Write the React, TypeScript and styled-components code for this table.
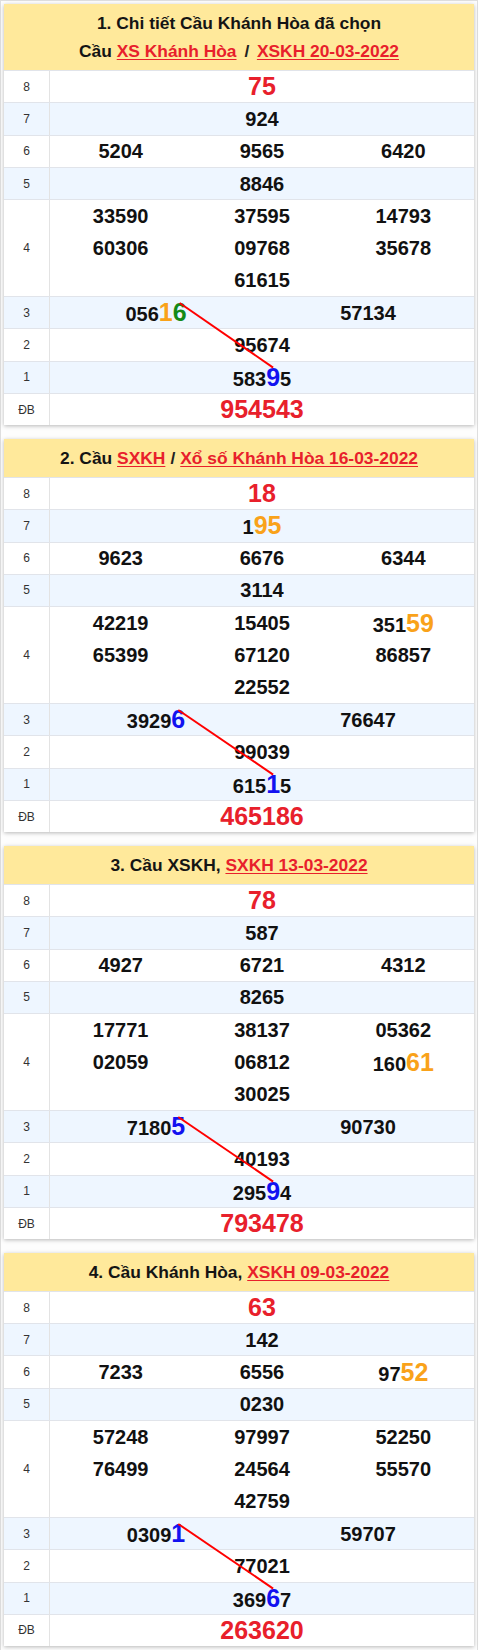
import React, { useLayoutEffect, useRef, useState } from "react";
import styled, { createGlobalStyle } from "styled-components";

type Tone = "red" | "orange" | "green" | "blue";
type Piece = string | { t: string; tone: Tone; anchor?: "start" | "end" };
type Num = { pieces: Piece[]; big?: boolean };
type Cell = Num | null;
type RowData = { label: string; cols: number; lines: Cell[][] };
type HeadPart = string | { link: string } | { sep: string; wide?: boolean };
type CardData = { head: HeadPart[][]; rows: RowData[] };

const TONES: Record<Tone, string> = {
  red: "#e8202b",
  orange: "#f9a21a",
  green: "#138a17",
  blue: "#1212f0",
};

const n = (...pieces: Piece[]): Num => ({ pieces });
const big = (t: string): Num => ({ pieces: [t], big: true });
const o = (t: string): Piece => ({ t, tone: "orange" });
const g = (t: string, anchor?: "start" | "end"): Piece => ({ t, tone: "green", anchor });
const b = (t: string, anchor?: "start" | "end"): Piece => ({ t, tone: "blue", anchor });

const row = (label: string, cols: number, lines: (Cell | string)[][]): RowData => ({
  label,
  cols,
  lines: lines.map((l) => l.map((c) => (typeof c === "string" ? n(c) : c))),
});

const CARDS: CardData[] = [
  {
    head: [
      ["1. Chi tiết Cầu Khánh Hòa đã chọn"],
      ["Cầu ", { link: "XS Khánh Hòa" }, { sep: "/", wide: true }, { link: "XSKH 20-03-2022" }],
    ],
    rows: [
      row("8", 1, [[big("75")]]),
      row("7", 1, [["924"]]),
      row("6", 3, [["5204", "9565", "6420"]]),
      row("5", 1, [["8846"]]),
      row("4", 3, [
        ["33590", "37595", "14793"],
        ["60306", "09768", "35678"],
        [null, "61615", null],
      ]),
      row("3", 2, [[n("056", o("1"), g("6", "start")), "57134"]]),
      row("2", 1, [["95674"]]),
      row("1", 1, [[n("583", b("9", "end"), "5")]]),
      row("ĐB", 1, [[big("954543")]]),
    ],
  },
  {
    head: [["2. Cầu ", { link: "SXKH" }, { sep: "/" }, { link: "Xổ số Khánh Hòa 16-03-2022" }]],
    rows: [
      row("8", 1, [[big("18")]]),
      row("7", 1, [[n("1", o("95"))]]),
      row("6", 3, [["9623", "6676", "6344"]]),
      row("5", 1, [["3114"]]),
      row("4", 3, [
        ["42219", "15405", n("351", o("59"))],
        ["65399", "67120", "86857"],
        [null, "22552", null],
      ]),
      row("3", 2, [[n("3929", b("6", "start")), "76647"]]),
      row("2", 1, [["99039"]]),
      row("1", 1, [[n("615", b("1", "end"), "5")]]),
      row("ĐB", 1, [[big("465186")]]),
    ],
  },
  {
    head: [["3. Cầu XSKH, ", { link: "SXKH 13-03-2022" }]],
    rows: [
      row("8", 1, [[big("78")]]),
      row("7", 1, [["587"]]),
      row("6", 3, [["4927", "6721", "4312"]]),
      row("5", 1, [["8265"]]),
      row("4", 3, [
        ["17771", "38137", "05362"],
        ["02059", "06812", n("160", o("61"))],
        [null, "30025", null],
      ]),
      row("3", 2, [[n("7180", b("5", "start")), "90730"]]),
      row("2", 1, [["40193"]]),
      row("1", 1, [[n("295", b("9", "end"), "4")]]),
      row("ĐB", 1, [[big("793478")]]),
    ],
  },
  {
    head: [["4. Cầu Khánh Hòa, ", { link: "XSKH 09-03-2022" }]],
    rows: [
      row("8", 1, [[big("63")]]),
      row("7", 1, [["142"]]),
      row("6", 3, [["7233", "6556", n("97", o("52"))]]),
      row("5", 1, [["0230"]]),
      row("4", 3, [
        ["57248", "97997", "52250"],
        ["76499", "24564", "55570"],
        [null, "42759", null],
      ]),
      row("3", 2, [[n("0309", b("1", "start")), "59707"]]),
      row("2", 1, [["77021"]]),
      row("1", 1, [[n("369", b("6", "end"), "7")]]),
      row("ĐB", 1, [[big("263620")]]),
    ],
  },
];

const LINE_UNIT = 32.3;

const GlobalStyle = createGlobalStyle`
  html, body {
    margin: 0;
    padding: 0;
    background: #ffffff;
  }
  body {
    font-family: "Liberation Sans", Arial, sans-serif;
    color: #111;
  }
`;

const Page = styled.main`
  box-sizing: border-box;
  width: 478px;
  min-height: 1650px;
  border: 1px solid #dedede;
  border-bottom: none;
  padding: 3px 3px 0 3px;
  display: flex;
  flex-direction: column;
  gap: 13.7px;
  background: #fdfdfd;
`;

const Card = styled.section`
  background: #ffffff;
  box-shadow: 0 1px 4px rgba(0, 0, 0, 0.28);
`;

const Header = styled.header`
  background: #ffe99b;
  padding: 5px 6px;
  text-align: center;
`;

const HeadLine = styled.div`
  font-size: 17.4px;
  line-height: 28px;
  font-weight: 700;
  color: #141414;
  white-space: nowrap;
`;

const HeadLink = styled.a`
  color: #e8202b;
  text-decoration: underline;
  text-decoration-thickness: 1px;
  text-underline-offset: 2px;
`;

const Sep = styled.span<{ $wide?: boolean }>`
  margin: 0 ${(p) => (p.$wide ? 7.5 : 5)}px 0 ${(p) => (p.$wide ? 8 : 5)}px;
  color: #222;
`;

const Board = styled.div`
  position: relative;
`;

const Row = styled.div<{ $lines: number; $alt: boolean }>`
  box-sizing: border-box;
  display: grid;
  grid-template-columns: 46px 1fr;
  height: ${(p) => p.$lines * LINE_UNIT}px;
  border-top: 1px solid #e1e4ea;
  background: ${(p) => (p.$alt ? "#eef6ff" : "#ffffff")};
`;

const Label = styled.div`
  display: flex;
  align-items: center;
  justify-content: center;
  border-right: 1px solid #e3e3e3;
  font-size: 12px;
  color: #333;
`;

const Values = styled.div<{ $cols: number; $lines: number }>`
  display: grid;
  grid-template-columns: repeat(${(p) => p.$cols}, 1fr);
  grid-template-rows: repeat(${(p) => p.$lines}, 1fr);
  align-items: center;
  justify-items: center;
`;

const Number = styled.span<{ $big?: boolean }>`
  font-size: ${(p) => (p.$big ? 25 : 20)}px;
  line-height: 1;
  font-weight: 700;
  color: ${(p) => (p.$big ? TONES.red : "#111")};
  white-space: nowrap;
`;

const Hi = styled.span<{ $tone: Tone }>`
  font-size: 25px;
  color: ${(p) => TONES[p.$tone]};
`;

const Overlay = styled.svg`
  position: absolute;
  left: 0;
  top: 0;
  width: 100%;
  height: 100%;
  pointer-events: none;
  overflow: visible;
`;

function NumberView({ num }: { num: Num }) {
  return (
    <Number $big={num.big}>
      {num.pieces.map((p, i) =>
        typeof p === "string" ? (
          <React.Fragment key={i}>{p}</React.Fragment>
        ) : (
          <Hi key={i} $tone={p.tone} data-anchor={p.anchor}>
            {p.t}
          </Hi>
        )
      )}
    </Number>
  );
}

function Table({ rows }: { rows: RowData[] }) {
  const ref = useRef<HTMLDivElement>(null);
  const [seg, setSeg] = useState<[number, number, number, number] | null>(null);

  useLayoutEffect(() => {
    const measure = () => {
      const el = ref.current;
      if (!el) return;
      const a = el.querySelector('[data-anchor="start"]');
      const z = el.querySelector('[data-anchor="end"]');
      if (!a || !z) return;
      const r = el.getBoundingClientRect();
      const ra = a.getBoundingClientRect();
      const rz = z.getBoundingClientRect();
      const glyphTop = (h: DOMRect) => h.top - r.top + h.height * 0.17;
      setSeg([
        ra.left - r.left + ra.width / 2,
        glyphTop(ra),
        rz.left - r.left + rz.width / 2,
        glyphTop(rz),
      ]);
    };
    measure();
    if (document.fonts && document.fonts.ready) {
      document.fonts.ready.then(measure);
    }
  }, []);

  return (
    <Board ref={ref}>
      {rows.map((r, i) => (
        <Row key={r.label} $lines={r.lines.length} $alt={i % 2 === 1}>
          <Label>{r.label}</Label>
          <Values $cols={r.cols} $lines={r.lines.length}>
            {r.lines.flatMap((line, li) =>
              line.map((c, ci) =>
                c ? <NumberView key={`${li}-${ci}`} num={c} /> : <span key={`${li}-${ci}`} />
              )
            )}
          </Values>
        </Row>
      ))}
      {seg && (
        <Overlay>
          <line x1={seg[0]} y1={seg[1]} x2={seg[2]} y2={seg[3]} stroke="#ff0000" strokeWidth={2} />
        </Overlay>
      )}
    </Board>
  );
}

function CardView({ card }: { card: CardData }) {
  return (
    <Card>
      <Header>
        {card.head.map((line, i) => (
          <HeadLine key={i}>
            {line.map((part, j) => {
              if (typeof part === "string") return <React.Fragment key={j}>{part}</React.Fragment>;
              if ("link" in part)
                return (
                  <HeadLink key={j} href="#">
                    {part.link}
                  </HeadLink>
                );
              return (
                <Sep key={j} $wide={part.wide}>
                  {part.sep}
                </Sep>
              );
            })}
          </HeadLine>
        ))}
      </Header>
      <Table rows={card.rows} />
    </Card>
  );
}

export default function App() {
  return (
    <>
      <GlobalStyle />
      <Page>
        {CARDS.map((c, i) => (
          <CardView key={i} card={c} />
        ))}
      </Page>
    </>
  );
}
